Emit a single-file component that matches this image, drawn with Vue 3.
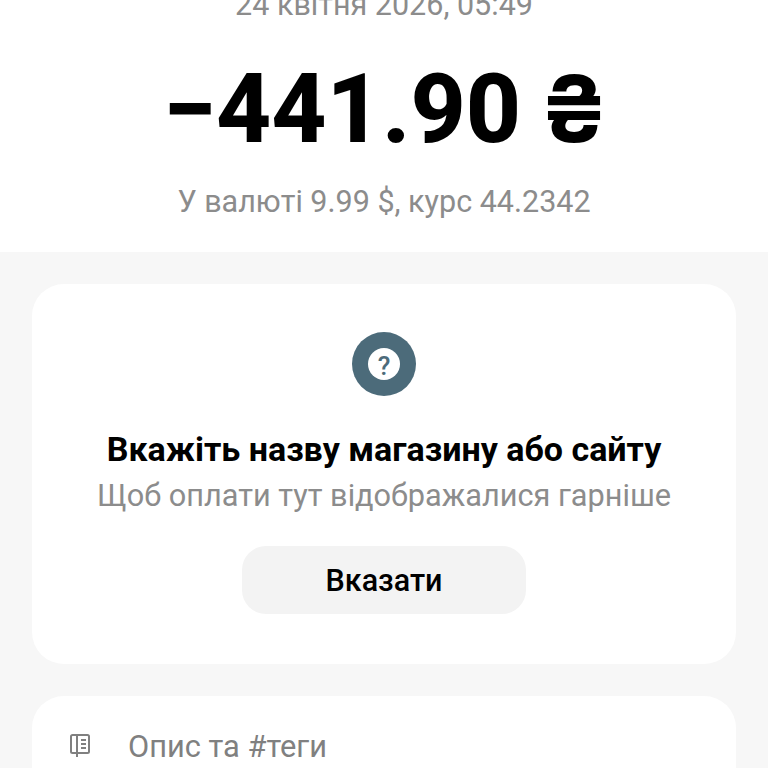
<script setup>
const title = 'Вкажіть назву магазину або сайту'
</script>

<template>
  <div class="page">
    <header class="head">
      <div class="date">24 квітня 2026, 05:49</div>
      <div class="amount">−441.90 <span class="cur">₴</span></div>
      <div class="rate">У валюті 9.99 $, курс 44.2342</div>
    </header>
    <main class="body">
      <section class="card prompt">
        <div class="badge">
          <span class="badge-inner">?</span>
        </div>
        <h2 class="title">{{ title }}</h2>
        <p class="sub">Щоб оплати тут відображалися гарніше</p>
        <button class="btn">Вказати</button>
      </section>
      <section class="card note">
        <svg class="note-icon" width="24" height="26" viewBox="0 0 24 26" fill="none" stroke="#808080" stroke-width="2">
          <path d="M9 21H4.500A1.500 1.500 0 0 1 3 19.500V4.500A1.500 1.500 0 0 1 4.500 3H19.500A1.500 1.500 0 0 1 21 4.500V19.500A1.500 1.500 0 0 1 19.500 21H9ZM9 3V25" />
          <path d="M13 8H18M13 12H18M13 16H18" stroke-width="1.800" />
        </svg>
        <span class="note-text">Опис та #теги</span>
      </section>
    </main>
  </div>
</template>

<style>
html, body { margin: 0; background: #f7f7f7; }
</style>

<style scoped>
.page {
  height: 768px;
  overflow: hidden;
  font-family: Roboto, "Noto Sans", sans-serif;
  background: #f7f7f7;
}
.head {
  background: #fff;
  height: 252px;
  display: flex;
  flex-direction: column;
  align-items: center;
}
.date {
  margin-top: -12px;
  font-size: 30.500px;
  line-height: 34px;
  color: #8c8c8c;
}
.amount {
  margin-top: 31px;
  padding-left: 3px;
  font-size: 96px;
  line-height: 112px;
  font-weight: 760;
  color: #000;
}
.cur {
  margin-left: -5px;
  font-family: Inter, sans-serif;
  font-weight: 700;
  font-size: 92px;
}
.rate {
  margin-top: 19px;
  font-size: 30.500px;
  line-height: 36px;
  color: #8c8c8c;
}
.body {
  padding: 32px;
  display: flex;
  flex-direction: column;
  gap: 32px;
}
.card {
  background: #fff;
  border-radius: 32px;
}
.prompt {
  height: 380px;
  box-sizing: border-box;
  padding-top: 48px;
  display: flex;
  flex-direction: column;
  align-items: center;
}
.badge {
  width: 64px;
  height: 64px;
  border-radius: 50%;
  background: #4c6b7a;
  display: flex;
  align-items: center;
  justify-content: center;
}
.badge-inner {
  width: 32px;
  height: 32px;
  border-radius: 50%;
  background: #fff;
  color: #4c6b7a;
  font-size: 26px;
  line-height: 36px;
  font-weight: 500;
  text-align: center;
}
.title {
  margin: 32px 0 0;
  font-size: 34px;
  line-height: 42px;
  font-weight: 680;
  color: #000;
}
.sub {
  margin: 6px 0 0;
  font-size: 30.700px;
  line-height: 40px;
  color: #8c8c8c;
}
.btn {
  margin-top: 30px;
  width: 284px;
  height: 68px;
  border: 0;
  border-radius: 24px;
  background: #f3f3f3;
  font-family: inherit;
  font-size: 30.500px;
  font-weight: 490;
  color: #000;
}
.note {
  height: 120px;
  box-sizing: border-box;
  padding: 34px 0 0 36px;
  display: flex;
  align-items: flex-start;
}
.note-icon { margin-top: 2px; }
.note-text {
  margin-left: 36px;
  font-size: 30.800px;
  line-height: 34px;
  color: #808080;
}
</style>
